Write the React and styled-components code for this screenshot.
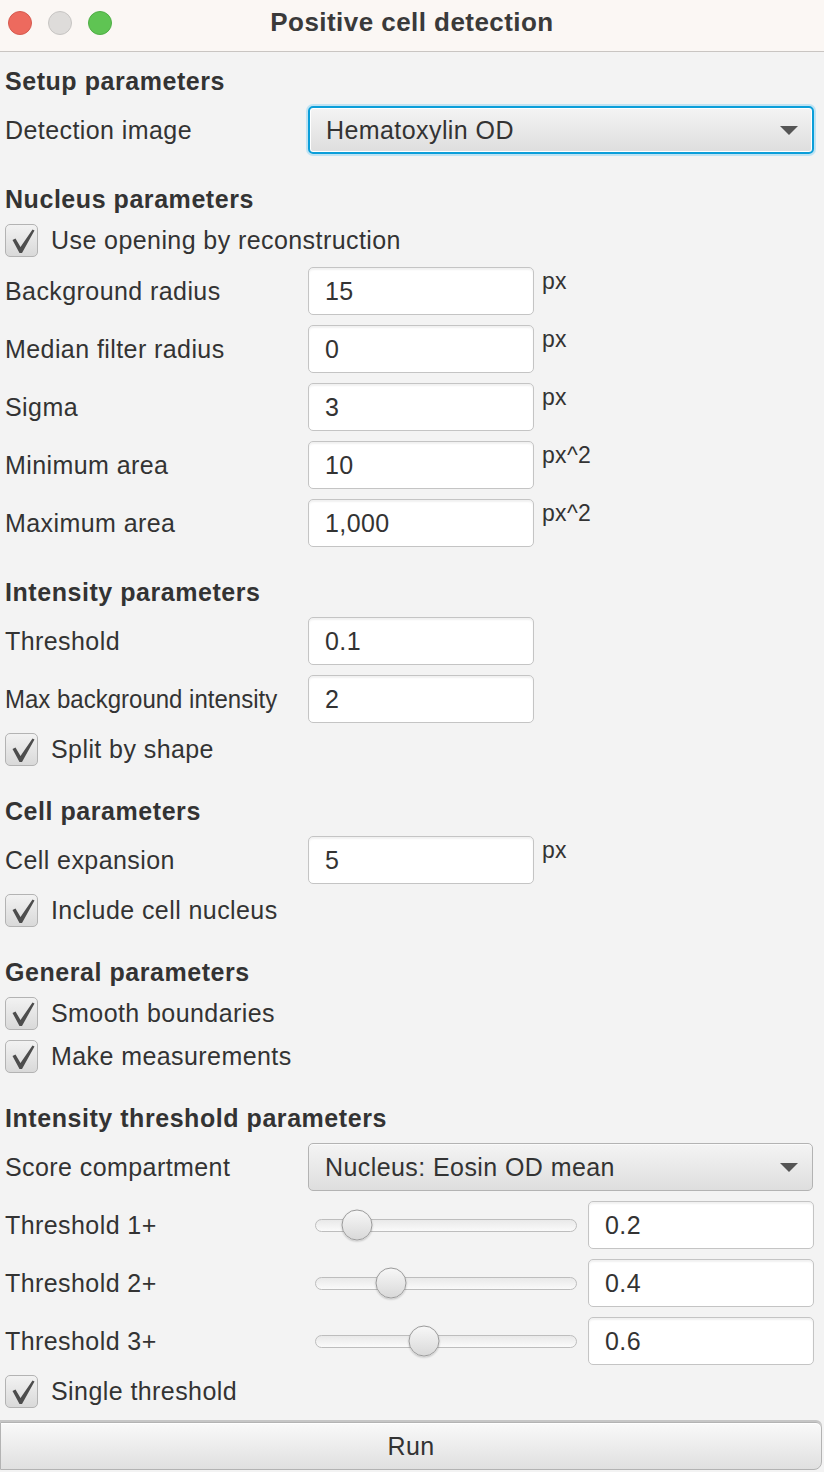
import React from 'react'
import styled, { createGlobalStyle } from 'styled-components'

const GlobalStyle = createGlobalStyle`
  html, body {
    margin: 0;
    padding: 0;
    background: #f3f3f3;
  }
  body {
    font-family: "Liberation Sans", Helvetica, Arial, sans-serif;
    color: #333;
  }
`

const Window = styled.div`
  width: 824px;
  height: 1472px;
  display: flex;
  flex-direction: column;
  background: #f3f3f3;
  overflow: hidden;
`

const TitleBar = styled.div`
  height: 52px;
  flex-shrink: 0;
  box-sizing: border-box;
  padding-bottom: 6px;
  display: flex;
  align-items: center;
  position: relative;
  background: #fbf7f4;
  border-bottom: 1px solid #c9c5c2;
`
const Lights = styled.div`
  display: flex;
  column-gap: 16px;
  padding-left: 8px;
`
const Light = styled.span`
  width: 24px;
  height: 24px;
  border-radius: 50%;
  box-sizing: border-box;
  background: ${p => p.color};
  border: 1px solid ${p => p.edge};
`
const Title = styled.div`
  position: absolute;
  left: 0;
  right: 0;
  top: 7px;
  text-align: center;
  font-size: 26px;
  letter-spacing: 0.45px;
  font-weight: bold;
  color: #3a3a3a;
  pointer-events: none;
`

const Content = styled.div`
  flex: 1;
  display: flex;
  flex-direction: column;
  padding: 9px 0 0 5px;
`

const Section = styled.div`
  display: flex;
  flex-direction: column;
  & + & {
    margin-top: 20px;
  }
`
const Header = styled.div`
  height: 40px;
  display: flex;
  align-items: center;
  font-size: 25px;
  letter-spacing: 0.55px;
  font-weight: bold;
  color: #333;
`

const Row = styled.div`
  height: 58px;
  display: flex;
  align-items: center;
`
const Label = styled.span`
  width: 303px;
  flex-shrink: 0;
  font-size: 25px;
  letter-spacing: ${p => p.$tight ? '0' : '0.42px'};
  transform: ${p => p.$tight ? 'scaleX(0.96)' : 'none'};
  transform-origin: left center;
  white-space: nowrap;
`
const Input = styled.div`
  width: 226px;
  height: 48px;
  flex-shrink: 0;
  box-sizing: border-box;
  display: flex;
  align-items: center;
  padding-left: 16px;
  font-size: 25px;
  letter-spacing: 0.42px;
  background: #fff;
  border: 1px solid #c4c4c4;
  border-radius: 5px;
  box-shadow: inset 0 2px 2px rgba(0, 0, 0, 0.06);
`
const Unit = styled.span`
  align-self: flex-start;
  margin-top: 6px;
  margin-left: 8px;
  font-size: 23px;
  letter-spacing: 0.3px;
`

const Combo = styled.div`
  width: ${p => p.$width}px;
  height: 48px;
  box-sizing: border-box;
  display: flex;
  align-items: center;
  justify-content: space-between;
  padding: 0 14px 0 16px;
  font-size: 25px;
  letter-spacing: 0.42px;
  border-radius: 5px;
  background: linear-gradient(#f4f4f4, #dedede);
  border: ${p => p.$focused ? '2px solid #0b9ed9' : '1px solid #b3b3b3'};
  box-shadow: ${p => p.$focused ? '0 0 0 2px #bfe3f3, inset 0 0 0 1px #ffffff' : 'inset 0 1px 0 #fafafa'};
`
const Arrow = styled.span`
  width: 0;
  height: 0;
  border-left: 9px solid transparent;
  border-right: 9px solid transparent;
  border-top: 9px solid #555;
`

const CheckRow = styled.div`
  height: 43px;
  display: flex;
  align-items: center;
  column-gap: 13px;
  font-size: 25px;
  letter-spacing: 0.42px;
`
const Box = styled.span`
  width: 33px;
  height: 33px;
  box-sizing: border-box;
  border-radius: 5px;
  border: 1px solid #b3b3b3;
  background: linear-gradient(#f2f2f2, #d9d9d9);
  svg {
    display: block;
  }
`

const SliderWrap = styled.div`
  width: 280px;
  flex-shrink: 0;
  display: flex;
  align-items: center;
  padding-left: 7px;
  box-sizing: border-box;
`
const Track = styled.div`
  position: relative;
  width: 262px;
  height: 13px;
  box-sizing: border-box;
  border-radius: 7px;
  border: 1px solid #bdbdbd;
  background: linear-gradient(#e9e9e9, #fafafa);
`
const Thumb = styled.span`
  position: absolute;
  top: 50%;
  width: 31px;
  height: 31px;
  box-sizing: border-box;
  border-radius: 50%;
  transform: translate(-50%, -50%);
  border: 1px solid #9b9b9b;
  background: linear-gradient(#f7f7f7, #d9d9d9);
  box-shadow: 0 1px 2px rgba(0, 0, 0, 0.2);
`

const RunBar = styled.div`
  flex-shrink: 0;
  padding: 0 2px 2px 0;
`
const RunButton = styled.button`
  width: 100%;
  height: 48px;
  display: block;
  font-family: inherit;
  font-size: 25px;
  letter-spacing: 0.42px;
  color: #333;
  border: 1px solid #b3b3b3;
  border-radius: 0 6px 8px 0;
  background: linear-gradient(#f9f9f9, #e0e0e0);
  box-shadow: 0 -2px 0 #c6c6c6, inset 0 1px 0 #fff;
`

function Check({ children }) {
  return (
    <CheckRow>
      <Box>
        <svg width="31" height="31" viewBox="0 0 31 31">
          <polygon points="6.5,15 9.5,13.5 14.5,22 26.5,4.5 28.5,5.5 16,28 13.5,28" fill="#4d4d4d" />
        </svg>
      </Box>
      {children}
    </CheckRow>
  )
}

function Field({ label, value, unit, tight }) {
  return (
    <Row>
      <Label $tight={tight}>{label}</Label>
      <Input>{value}</Input>
      {unit && <Unit>{unit}</Unit>}
    </Row>
  )
}

function Slider({ label, value }) {
  // thumb centre: 8px + 167px per unit from track start
  const left = 8 + 167 * value
  return (
    <Row>
      <Label>{label}</Label>
      <SliderWrap>
        <Track>
          <Thumb style={{ left }} />
        </Track>
      </SliderWrap>
      <Input>{value}</Input>
    </Row>
  )
}

export default function App() {
  const nucleus = [
    { label: 'Background radius', value: '15', unit: 'px' },
    { label: 'Median filter radius', value: '0', unit: 'px' },
    { label: 'Sigma', value: '3', unit: 'px' },
    { label: 'Minimum area', value: '10', unit: 'px^2' },
    { label: 'Maximum area', value: '1,000', unit: 'px^2' },
  ]

  return (
    <Window>
      <GlobalStyle />
      <TitleBar>
        <Lights>
          <Light color="#ed6a5e" edge="#d65a4f" />
          <Light color="#dedcda" edge="#c7c5c3" />
          <Light color="#5fc453" edge="#4fae45" />
        </Lights>
        <Title>Positive cell detection</Title>
      </TitleBar>

      <Content>
        <Section>
          <Header>Setup parameters</Header>
          <Row>
            <Label>Detection image</Label>
            <Combo $width={506} $focused>
              Hematoxylin OD
              <Arrow />
            </Combo>
          </Row>
        </Section>

        <Section>
          <Header>Nucleus parameters</Header>
          <Check>Use opening by reconstruction</Check>
          {nucleus.map(f => (
            <Field key={f.label} {...f} />
          ))}
        </Section>

        <Section>
          <Header>Intensity parameters</Header>
          <Field label="Threshold" value="0.1" />
          <Field label="Max background intensity" value="2" tight />
          <Check>Split by shape</Check>
        </Section>

        <Section>
          <Header>Cell parameters</Header>
          <Field label="Cell expansion" value="5" unit="px" />
          <Check>Include cell nucleus</Check>
        </Section>

        <Section>
          <Header>General parameters</Header>
          <Check>Smooth boundaries</Check>
          <Check>Make measurements</Check>
        </Section>

        <Section>
          <Header>Intensity threshold parameters</Header>
          <Row>
            <Label>Score compartment</Label>
            <Combo $width={505}>
              Nucleus: Eosin OD mean
              <Arrow />
            </Combo>
          </Row>
          <Slider label="Threshold 1+" value={0.2} />
          <Slider label="Threshold 2+" value={0.4} />
          <Slider label="Threshold 3+" value={0.6} />
          <Check>Single threshold</Check>
        </Section>
      </Content>

      <RunBar>
        <RunButton>Run</RunButton>
      </RunBar>
    </Window>
  )
}
